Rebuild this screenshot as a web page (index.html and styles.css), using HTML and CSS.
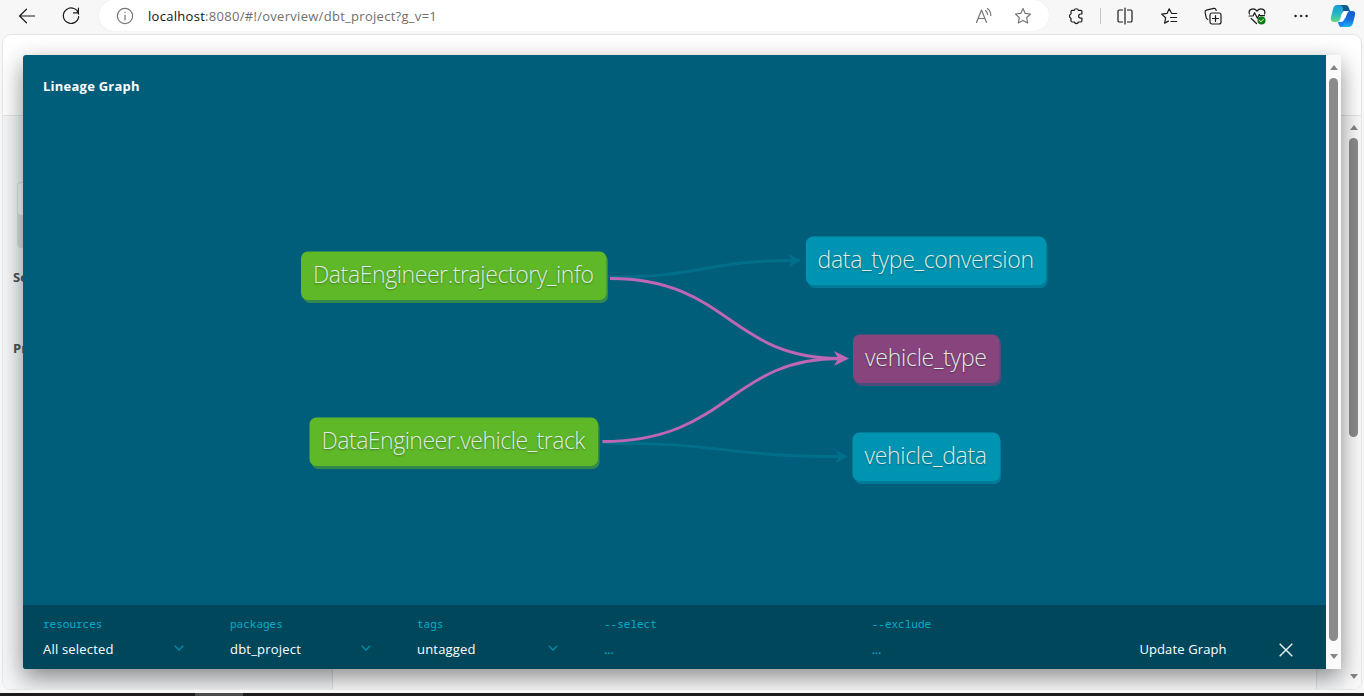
FILE: index.html
```
<!DOCTYPE html>
<html lang="en">
<head>
<meta charset="utf-8">
<title>Lineage Graph</title>
<link rel="stylesheet" href="styles.css">
</head>
<body>
<header class="toolbar">
  <svg class="icon back" width="20" height="20" viewBox="0 0 20 20"><path d="M17.5 10H2.5M9.5 3.200 2.600 10l6.900 6.800"/></svg>
  <svg class="icon reload" width="20" height="20" viewBox="0 0 20 20"><path d="M17.600 8.200A7.700 7.700 0 1 0 17.700 10.600M12.500 6.900H17.400V2.200"/></svg>
  <div class="address">
    <svg class="icon muted" width="18" height="18" viewBox="0 0 18 18"><circle cx="9" cy="9" r="7.600"/><path d="M9 8v5M9 5v.6"/></svg>
    <span class="url"><b class="host">localhost</b>:8080/#!/overview/dbt_project?g_v=1</span>
    <svg class="icon muted read" width="18" height="18" viewBox="0 0 18 18"><path d="M1.500 15.500 6.500 3l5 12.500M3.200 11.500h6.600M10.500 3.500q2 1.500 2 4M12.500 1.500q3.300 2.500 3.300 7"/></svg>
    <svg class="icon muted" width="18" height="18" viewBox="0 0 18 18"><path d="m9 1.500 2.250 4.900 5.250.65-3.850 3.650 1 5.300L9 13.400 4.350 16l1-5.300L1.500 7.050l5.250-.65z"/></svg>
  </div>
  <div class="actions">
    <svg class="icon" width="18" height="18" viewBox="0 0 18 18"><path d="M5.200 3.300h2a2.200 2.200 0 0 1 4.200 0h2.300a1.200 1.200 0 0 1 1.200 1.200v2.500h-1.200a2 2 0 0 0 0 4.200h1.200v2.600a1.200 1.200 0 0 1-1.200 1.200h-2.200a2.200 2.200 0 0 1-4.200 0H5.200a1.200 1.200 0 0 1-1.200-1.200v-2.600a2.200 2.200 0 0 1 0-4.200V4.500a1.200 1.200 0 0 1 1.200-1.200z"/></svg>
    <i class="divider"></i>
    <svg class="icon split" width="18" height="18" viewBox="0 0 18 18"><path d="M9 1v16M6.500 3H3.200Q2 3 2 4.300v9.400Q2 15 3.200 15H6.500M11.500 3h3.300Q16 3 16 4.300v9.400q0 1.300-1.200 1.300H11.500"/></svg>
    <svg class="icon fav" width="18" height="18" viewBox="0 0 18 18"><path d="M16.700 6.500h-5L9.200 1.800 7 6.400l-5.300.7 3.900 3.700-1 5.300 3.800-2M10.500 10.500h6.200M11 14.500h5.700"/></svg>
    <svg class="icon coll" width="18" height="18" viewBox="0 0 18 18"><rect x="6" y="6" width="11" height="11" rx="2"/><path d="M11.500 8.500v6M8.500 11.500h6M3.800 12.500Q2.500 12 2.200 10.700L1.100 5.300q-.3-1.700 1.300-2.200L9.700 1.400q1.800-.3 2.300 1.300l.2.800"/></svg>
    <svg class="icon heart" width="18" height="18" viewBox="0 0 18 18"><path d="M1.500 7Q.2 3.800 3 2.400 6.300.9 9 4q2.700-3.100 6-1.600Q17.800 3.800 16.500 7M1 9h4l1.600-3.300 2.800 5.600 1.900-3.800.7 1.200h4.500M3.200 11.500 8.500 16.500"/><circle class="ok" cx="13.500" cy="13.500" r="4"/><path class="tick" d="m11.600 13.600 1.300 1.300 2.500-2.700"/></svg>
    <svg class="icon dots" width="18" height="18" viewBox="0 0 18 18"><circle cx="3.500" cy="9" r=".9"/><circle cx="9" cy="9" r=".9"/><circle cx="14.500" cy="9" r=".9"/></svg>
    <svg class="copilot" width="26" height="24" viewBox="0 0 26 24">
      <defs>
        <linearGradient id="left" x1="0" y1="0" x2="0" y2="1"><stop offset="0" stop-color="#199bd8"/><stop offset=".55" stop-color="#28b8c5"/><stop offset="1" stop-color="#62dc7c"/></linearGradient>
        <linearGradient id="right" x1="0" y1="0" x2="0" y2="1"><stop offset="0" stop-color="#155bd0"/><stop offset=".5" stop-color="#1769dc"/><stop offset="1" stop-color="#18b5f4"/></linearGradient>
      </defs>
      <path fill="url(#left)" d="M7 1h9q-2 1-3 5l-3 9q-1 3-4 3H4q-4 0-3-5L3 5q1-4 4-4z"/>
      <path fill="#0a5d8e" d="M10 1h6q2 0 3 3l1 3h-5q-2 0-3 3l1-5q0-3-3-4z"/>
      <path fill="url(#right)" d="M19 7h3q4 0 3 4l-2 8q-1 4-5 4H10q2 0 3-3l4-10q1-3 2-3z"/>
      <path fill="#1684ee" d="M8 18q2-1 3-4h5l-2 6q-1 3-3 3-2 0-3-5z"/>
      <path fill="#fff" d="M14 7h5q-2 1-3 4l-2 5q-1 2-3 2H8q2-1 3-4l1-4q1-3 2-3z"/>
    </svg>
  </div>
</header>

<main class="page">
  <div class="site-head"></div>
  <div class="site-body">
    <aside class="sidebar">
      <div class="tabs"><div class="tab"></div></div>
      <p class="group">Sources</p>
      <p class="group">Projects</p>
    </aside>
    <div class="content"></div>
    <div class="gutter"></div>
    <div class="scroll outer"><i class="up"></i><i class="thumb outer-thumb"></i><i class="down"></i></div>
  </div>

  <section class="modal">
    <div class="panel">
      <h1 class="title">Lineage Graph</h1>
      <svg class="graph" width="1303" height="550" viewBox="23 55 1303 550">
        <g class="edge faint">
          <path d="M610 277C705 277 705 260.500 792 260.500"/><path class="head" d="m788 253.500 13 7-13 7 4-7z"/>
          <path d="M603 443C725 443 725 456.500 840 456.500"/><path class="head" d="m835 449.500 13 7-13 7 4-7z"/>
        </g>
        <g class="edge">
          <path d="M610 278.500C729 278.500 729 358.500 840 358.500M602.500 441.500C729 441.500 729 358.500 840 358.500"/><path class="head" d="m834 351 15 7.500-15 7.500 4-7.500z"/>
        </g>
        <g class="node source"><rect class="under" x="303" y="254" width="305" height="49" rx="7"/><rect x="301" y="251.500" width="305.500" height="48.500" rx="7"/><text x="313" y="283" textLength="281">DataEngineer.trajectory_info</text></g>
        <g class="node source"><rect class="under" x="311.500" y="420" width="288" height="49" rx="7"/><rect x="309.500" y="417.500" width="288.500" height="48.500" rx="7"/><text x="321.500" y="449" textLength="264">DataEngineer.vehicle_track</text></g>
        <g class="node model"><rect class="under" x="808" y="239" width="239.500" height="49" rx="7"/><rect x="806" y="236.500" width="240" height="48.500" rx="7"/><text x="817.500" y="268" textLength="216.500">data_type_conversion</text></g>
        <g class="node chosen"><rect class="under" x="855" y="337" width="146" height="49" rx="7"/><rect x="853" y="334.500" width="146.500" height="48.500" rx="7"/><text x="865" y="366" textLength="122">vehicle_type</text></g>
        <g class="node model"><rect class="under" x="854.500" y="435" width="146.500" height="49" rx="7"/><rect x="852.500" y="432.500" width="147.500" height="48.500" rx="7"/><text x="864.500" y="464" textLength="122.500">vehicle_data</text></g>
      </svg>
      <footer class="controls">
        <div class="field"><span class="label">resources</span><span class="value">All selected<svg class="chev" width="10" height="6" viewBox="0 0 10 6"><path d="m.8.700 4.200 4.300L9.200.700"/></svg></span></div>
        <div class="field"><span class="label">packages</span><span class="value">dbt_project<svg class="chev" width="10" height="6" viewBox="0 0 10 6"><path d="m.8.700 4.200 4.300L9.200.700"/></svg></span></div>
        <div class="field"><span class="label">tags</span><span class="value">untagged<svg class="chev" width="10" height="6" viewBox="0 0 10 6"><path d="m.8.700 4.200 4.300L9.200.700"/></svg></span></div>
        <div class="field wide"><span class="label">--select</span><span class="value empty">...</span></div>
        <div class="field wide"><span class="label">--exclude</span><span class="value empty">...</span></div>
        <span class="update">Update Graph</span>
        <svg class="close" width="14" height="14" viewBox="0 0 14 14"><path d="m.7.700 12.600 12.600M13.300.700.700 13.300"/></svg>
      </footer>
    </div>
    <div class="scroll"><i class="up"></i><i class="thumb inner-thumb"></i><i class="down"></i></div>
  </section>
</main>
<div class="taskbar"><i class="active-app"></i></div>
</body>
</html>
```
FILE: styles.css
```
* { box-sizing: border-box; }
body { margin: 0; height: 696px; display: flex; flex-direction: column; overflow: hidden; background: #f7f7f7; font-family: "Open Sans", "Noto Sans", sans-serif; font-size: 13px; }

.toolbar { height: 34px; flex: none; display: flex; align-items: flex-start; padding: 6px 0 0 17px; }
.icon { flex: none; fill: none; stroke: #1b1b1b; stroke-width: 1.2; stroke-linejoin: round; stroke-linecap: round; }
.muted { stroke: #767676; }
.reload { margin-left: 24px; }
.address { height: 31px; width: 950px; margin: -6px 0 0 18px; padding: 1px 17px 0 17px; display: flex; align-items: center; border-radius: 15px; background: #fff; box-shadow: 0 0 1px #ddd; }
.url { margin-left: 14px; flex: 1; color: #6f6f6f; letter-spacing: .29px; }
.host { font-weight: 400; color: #111; }
.read { margin-right: 21px; }
.actions { flex: 1; height: 20px; display: flex; align-items: center; margin-left: 18px; }
.divider { width: 1px; height: 16px; background: #c6c6c6; margin: 0 15px; }
.fav { margin-left: 26px; }
.coll, .heart, .dots { margin-left: 26px; }
.dots circle { fill: #1b1b1b; stroke-width: .6; }
.ok { fill: #107c10; stroke: none; }
.tick { stroke: #fff; stroke-width: 1; }
.copilot { margin-left: 20px; flex: none; }

.page { position: relative; height: 656px; margin: 0 2px; flex: none; display: flex; flex-direction: column; border: 1px solid #e4e4e4; border-radius: 9px; background: #fff; overflow: hidden; }
.site-head { height: 81px; flex: none; border-bottom: 1px solid #e3e5e7; }
.site-body { flex: 1; display: flex; }
.sidebar { width: 330px; padding: 66px 0 0 14px; background: #f5f7f9; border-right: 1px solid #dfe2e4; }
.tabs { height: 66px; background: #dfe2e6; border-radius: 4px; }
.tab { height: 34px; background: #fbfcfd; border: 1px solid #dde0e3; border-radius: 4px; }
.group { margin: 19px 0 0 -4px; height: 52px; line-height: 20px; font-weight: 700; color: #4c535c; }
.content { flex: 1; }
.gutter { width: 30px; border-left: 1px solid #e3e5e8; background: #f7f9fb; }

.scroll { width: 15px; display: flex; flex-direction: column; align-items: center; background: #fafafa; }
.thumb { width: 9px; border-radius: 5px; background: #8b8b8b; }
.up, .down { border: 4.5px solid transparent; }
.up { border-top: 0; border-bottom: 5px solid #858585; margin: 10px 0 8px; }
.down { border-bottom: 0; border-top: 5px solid #858585; margin: auto 0 10px; }
.outer .up { margin-top: 9px; }
.outer-thumb { height: 299px; }
.inner-thumb { height: 563px; }

.modal { position: absolute; left: 20px; top: 20px; width: 1318px; height: 614px; display: flex; border-radius: 3px; box-shadow: 0 9px 25px rgba(0, 0, 0, .46); }
.panel { width: 1303px; display: flex; flex-direction: column; background: #005e7a; border-radius: 3px 0 0 3px; overflow: hidden; }
.title { margin: 21px 0 -41px 20px; height: 20px; font-size: 13px; line-height: 20px; color: #fff; letter-spacing: .24px; }
.graph { flex: none; display: block; }
.edge { fill: none; stroke: #bf67b5; stroke-width: 2.9; }
.edge .head { fill: #bf67b5; stroke: none; }
.faint { stroke: #006f8a; }
.faint .head { fill: #006f8a; }
.node text { font-size: 23px; font-weight: 330; fill: #dfece4; text-shadow: 0 1px 2px rgba(0, 0, 0, .35); }
.source { fill: #5fb828; }
.source .under { fill: #33894b; }
.model { fill: #0094b3; }
.model .under { fill: #007c9a; }
.chosen { fill: #88447d; }
.chosen .under { fill: #4c4d7d; }

.controls { height: 64px; flex: none; display: flex; padding: 10px 0 0 20px; background: #00475c; }
.field { width: 187px; display: flex; flex-direction: column; }
.wide { width: 267.700px; }
.label { height: 20px; line-height: 18px; font-family: "Noto Sans Mono", "DejaVu Sans Mono", monospace; font-size: 11px; color: #00adc8; }
.value { height: 28px; line-height: 28px; display: flex; align-items: center; justify-content: space-between; padding-right: 46px; color: #fff; letter-spacing: .2px; }
.chev { fill: none; stroke: #008da9; stroke-width: 1.3; margin-top: -2px; }
.empty { color: #00b0cb; letter-spacing: -.3px; }
.update { line-height: 28px; margin-top: 20px; width: 140px; color: #fff; letter-spacing: .12px; }
.close { margin-top: 28px; flex: none; fill: none; stroke: #eef4f6; stroke-width: 1.4; }

.taskbar { height: 3px; flex: none; margin-top: 3px; background: #1d1b1c; padding-left: 195px; }
.active-app { display: block; width: 48px; height: 3px; background: #4b4a4b; }
```
